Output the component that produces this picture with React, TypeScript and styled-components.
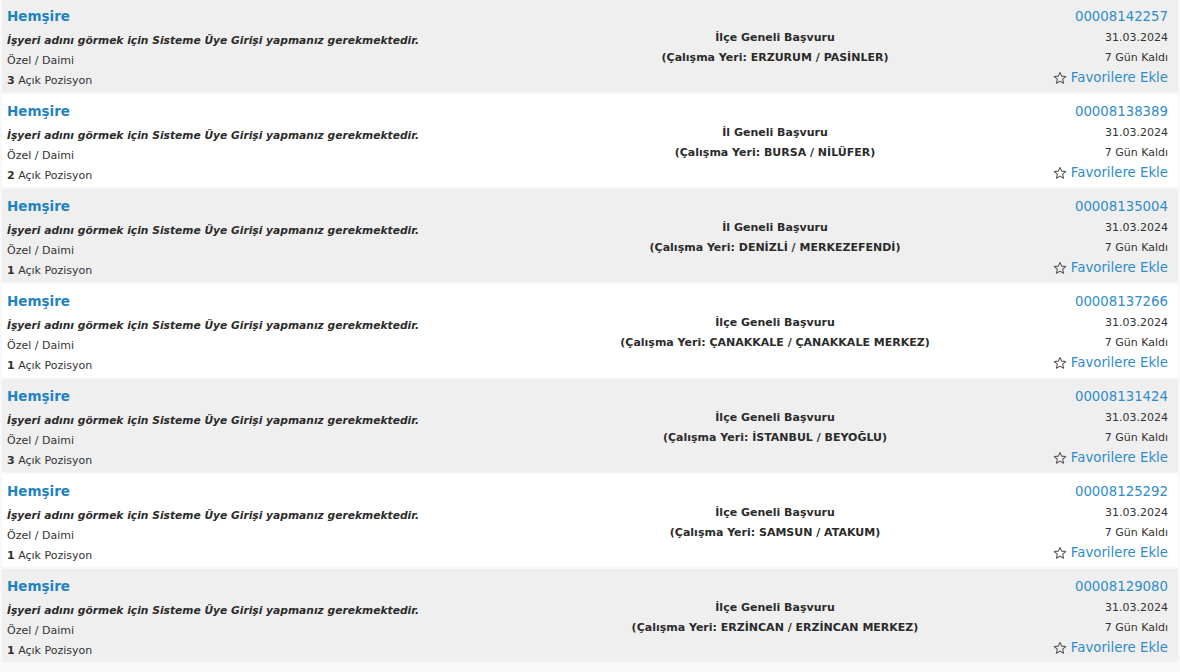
import React, { ReactElement } from 'react';
import styled, { createGlobalStyle } from 'styled-components';

type Ilan = {
  no: string;
  acik: number;
  basvuru: string;
  yer: string;
};

const ilanlar: Ilan[] = [
  { no: '00008142257', acik: 3, basvuru: 'İlçe Geneli Başvuru', yer: 'ERZURUM / PASİNLER' },
  { no: '00008138389', acik: 2, basvuru: 'İl Geneli Başvuru', yer: 'BURSA / NİLÜFER' },
  { no: '00008135004', acik: 1, basvuru: 'İl Geneli Başvuru', yer: 'DENİZLİ / MERKEZEFENDİ' },
  { no: '00008137266', acik: 1, basvuru: 'İlçe Geneli Başvuru', yer: 'ÇANAKKALE / ÇANAKKALE MERKEZ' },
  { no: '00008131424', acik: 3, basvuru: 'İlçe Geneli Başvuru', yer: 'İSTANBUL / BEYOĞLU' },
  { no: '00008125292', acik: 1, basvuru: 'İlçe Geneli Başvuru', yer: 'SAMSUN / ATAKUM' },
  { no: '00008129080', acik: 1, basvuru: 'İlçe Geneli Başvuru', yer: 'ERZİNCAN / ERZİNCAN MERKEZ' },
];

const StarIcon = () => (
  <svg width="14" height="14" viewBox="0 0 24 24" fill="none" stroke="#555" strokeWidth="1.8" strokeLinejoin="round">
    <path d="M12 2.5l2.9 6.3 6.9.7-5.2 4.6 1.5 6.8L12 17.4l-6.1 3.5 1.5-6.8-5.2-4.6 6.9-.7z" />
  </svg>
);

const App = (): ReactElement => {
  return (
    <>
      <GlobalStyle />
      <List>
        {ilanlar.map((item, i) => (
          <Row key={item.no} $white={i % 2 === 1}>
            <LeftCol>
              <Title>Hemşire</Title>
              <Warning>İşyeri adını görmek için Sisteme Üye Girişi yapmanız gerekmektedir.</Warning>
              <Info>Özel / Daimi</Info>
              <Info>
                <b>{item.acik}</b> Açık Pozisyon
              </Info>
            </LeftCol>
            <CenterCol>
              <CenterLine>{item.basvuru}</CenterLine>
              <CenterLine>(Çalışma Yeri: {item.yer})</CenterLine>
            </CenterCol>
            <RightCol>
              <IlanNo>{item.no}</IlanNo>
              <Info>31.03.2024</Info>
              <Info>7 Gün Kaldı</Info>
              <FavLink>
                <StarIcon />
                Favorilere Ekle
              </FavLink>
            </RightCol>
          </Row>
        ))}
      </List>
    </>
  );
};

const GlobalStyle = createGlobalStyle`
  html, body {
    margin: 0;
    padding: 0;
    background: #f8f8f8;
    font-family: "DejaVu Sans", Verdana, sans-serif;
    color: #333;
  }
`;

const List = styled.div`
  display: flex;
  flex-direction: column;
  gap: 2px;
  padding: 0 2px;
  margin-top: -1px;
`;

const Row = styled.div<{ $white: boolean }>`
  display: grid;
  grid-template-columns: 593px 350px 1fr;
  height: 93px;
  box-sizing: border-box;
  padding: 6px 10px 0 5px;
  background: ${({ $white }) => ($white ? '#ffffff' : '#efefef')};
`;

const LeftCol = styled.div`
  display: flex;
  flex-direction: column;
`;

const Title = styled.div`
  font-size: 13.5px;
  font-weight: 700;
  line-height: 22px;
  color: #1f82c2;
`;

const Warning = styled.div`
  margin-top: 4px;
  font-size: 10.7px;
  font-weight: 700;
  font-style: italic;
  line-height: 20px;
  color: #2b2b2b;
  white-space: nowrap;
`;

const Info = styled.div`
  font-size: 11px;
  line-height: 20px;
  color: #333;
  white-space: nowrap;
`;

const CenterCol = styled.div`
  display: flex;
  flex-direction: column;
  align-items: center;
  padding-top: 23px;
`;

const CenterLine = styled.div`
  font-size: 11px;
  font-weight: 700;
  line-height: 20px;
  color: #2b2b2b;
  white-space: nowrap;
`;

const RightCol = styled.div`
  display: flex;
  flex-direction: column;
  align-items: flex-end;
`;

const IlanNo = styled.div`
  font-size: 13.3px;
  line-height: 23px;
  color: #2f8ccb;
`;

const FavLink = styled.div`
  display: flex;
  align-items: center;
  gap: 4px;
  font-size: 13.3px;
  line-height: 20px;
  color: #2f8ccb;
  white-space: nowrap;
`;

export default App;
